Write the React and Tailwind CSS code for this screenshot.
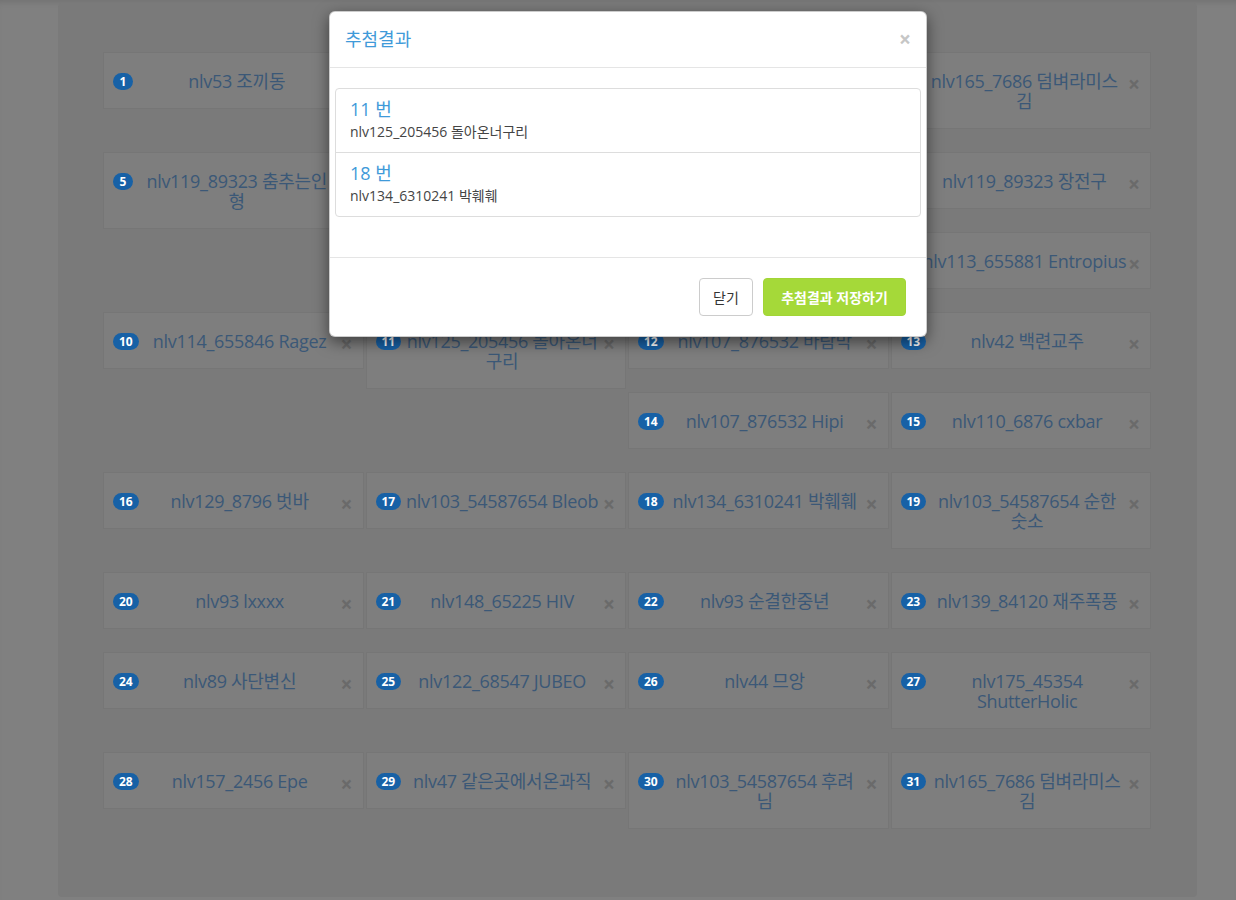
const cards = [
  { n: 1, lines: ["nlv53 조끼동"] },
  { n: 2, lines: ["nlv88_1024 하늘바람"] },
  { n: 3, lines: ["nlv101_3321 Mirae"] },
  { n: 4, lines: ["nlv165_7686 덤벼라미스", "김"] },
  { n: 5, lines: ["nlv119_89323 춤추는인", "형"] },
  { n: 6, lines: ["nlv150_42210 달빛아래", "기사"] },
  { n: 7, lines: ["nlv132_77801 붉은여우", "사냥꾼"] },
  { n: 8, lines: ["nlv119_89323 장전구"] },
  { n: 9, lines: ["nlv113_655881 Entropius"] },
  { n: 10, lines: ["nlv114_655846 Ragez"] },
  { n: 11, lines: ["nlv125_205456 돌아온너", "구리"] },
  { n: 12, lines: ["nlv107_876532 바람막"] },
  { n: 13, lines: ["nlv42 백련교주"] },
  { n: 14, lines: ["nlv107_876532 Hipi"] },
  { n: 15, lines: ["nlv110_6876 cxbar"] },
  { n: 16, lines: ["nlv129_8796 벗바"] },
  { n: 17, lines: ["nlv103_54587654 Bleob"] },
  { n: 18, lines: ["nlv134_6310241 박훼훼"] },
  { n: 19, lines: ["nlv103_54587654 순한", "숫소"] },
  { n: 20, lines: ["nlv93 lxxxx"] },
  { n: 21, lines: ["nlv148_65225 HIV"] },
  { n: 22, lines: ["nlv93 순결한중년"] },
  { n: 23, lines: ["nlv139_84120 재주폭풍"] },
  { n: 24, lines: ["nlv89 사단변신"] },
  { n: 25, lines: ["nlv122_68547 JUBEO"] },
  { n: 26, lines: ["nlv44 므앙"] },
  { n: 27, lines: ["nlv175_45354", "ShutterHolic"] },
  { n: 28, lines: ["nlv157_2456 Epe"] },
  { n: 29, lines: ["nlv47 같은곳에서온과직"] },
  { n: 30, lines: ["nlv103_54587654 후려", "님"] },
  { n: 31, lines: ["nlv165_7686 덤벼라미스", "김"] },
];

const results = [
  { no: "11 번", name: "nlv125_205456 돌아온너구리" },
  { no: "18 번", name: "nlv134_6310241 박훼훼" },
];

function Card({ n, lines }) {
  return (
    <div className="float-left w-[262.5px] pr-[2px] mb-[23px]">
      <div className="border border-[#767676] bg-[#7e7e7e] pl-[9px] pr-[10px] pt-[8px] pb-[7px]">
        <div className="flex items-start my-[10px]">
          <span className="shrink-0 mt-[2px] h-[17px] min-w-[20px] px-[6px] rounded-full bg-[#1761a6] text-white text-[12px] font-bold leading-[17px] text-center">
            {n}
          </span>
          <div className="flex-1 text-center text-[18px] leading-[20px] tracking-[-0.3px] text-[#3b5877] px-[2px]">
            {lines.map((l, i) => (
              <div key={i} className="whitespace-nowrap">{l}</div>
            ))}
          </div>
          <span className="shrink-0 h-[20px] mt-[3px] -mb-[3px] text-[21px] font-bold leading-[20px] text-[#6a6a6a]">×</span>
        </div>
      </div>
    </div>
  );
}

export default function App() {
  return (
    <div className="relative h-[900px] overflow-hidden bg-[#808080] font-['Open_Sans','Noto_Sans_CJK_KR',sans-serif] shadow-[inset_0_6px_6px_-4px_rgba(0,0,0,0.12)]">
      <div className="pt-[3px] pl-[58px]">
        <div className="w-[1139px] h-[894px] rounded-[4px] bg-[#7a7a7a] pl-[45px] pt-[49px]">
          <div className="w-[1050px] flow-root">
            {cards.map((c) => (
              <Card key={c.n} {...c} />
            ))}
          </div>
        </div>
      </div>

      <div className="absolute left-[329px] top-[11px] w-[598px] rounded-[6px] border border-black/20 bg-white shadow-[0_5px_15px_rgba(0,0,0,0.5)]">
        <div className="flex h-[56px] items-center justify-between border-b border-[#e5e5e5] px-[15px]">
          <h4 className="text-[18px] text-[#3f9ad9]">추첨결과</h4>
          <span className="text-[21px] font-bold leading-none text-[#c6c6c6]">×</span>
        </div>
        <div className="px-[5px] pt-[20px] pb-[40px]">
          <div className="rounded-[4px] border border-[#dddddd]">
            {results.map((r, i) => (
              <div key={i} className={"px-[14px] pt-[10px] pb-[10px] " + (i > 0 ? "border-t border-[#dddddd]" : "")}>
                <div className="text-[18px] leading-[20px] text-[#3f9ad9] mb-[3px]">{r.no}</div>
                <div className="text-[14px] leading-[20px] text-[#444444]">{r.name}</div>
              </div>
            ))}
          </div>
        </div>
        <div className="flex justify-end gap-[10px] border-t border-[#e5e5e5] p-[20px]">
          <button className="h-[38px] w-[54px] rounded-[4px] border border-[#cccccc] bg-white text-center text-[14px] text-[#333333]">닫기</button>
          <button className="h-[38px] w-[143px] rounded-[4px] border border-[#a2d536] bg-[#a5d939] text-center text-[14px] font-bold text-white">추첨결과 저장하기</button>
        </div>
      </div>
    </div>
  );
}
